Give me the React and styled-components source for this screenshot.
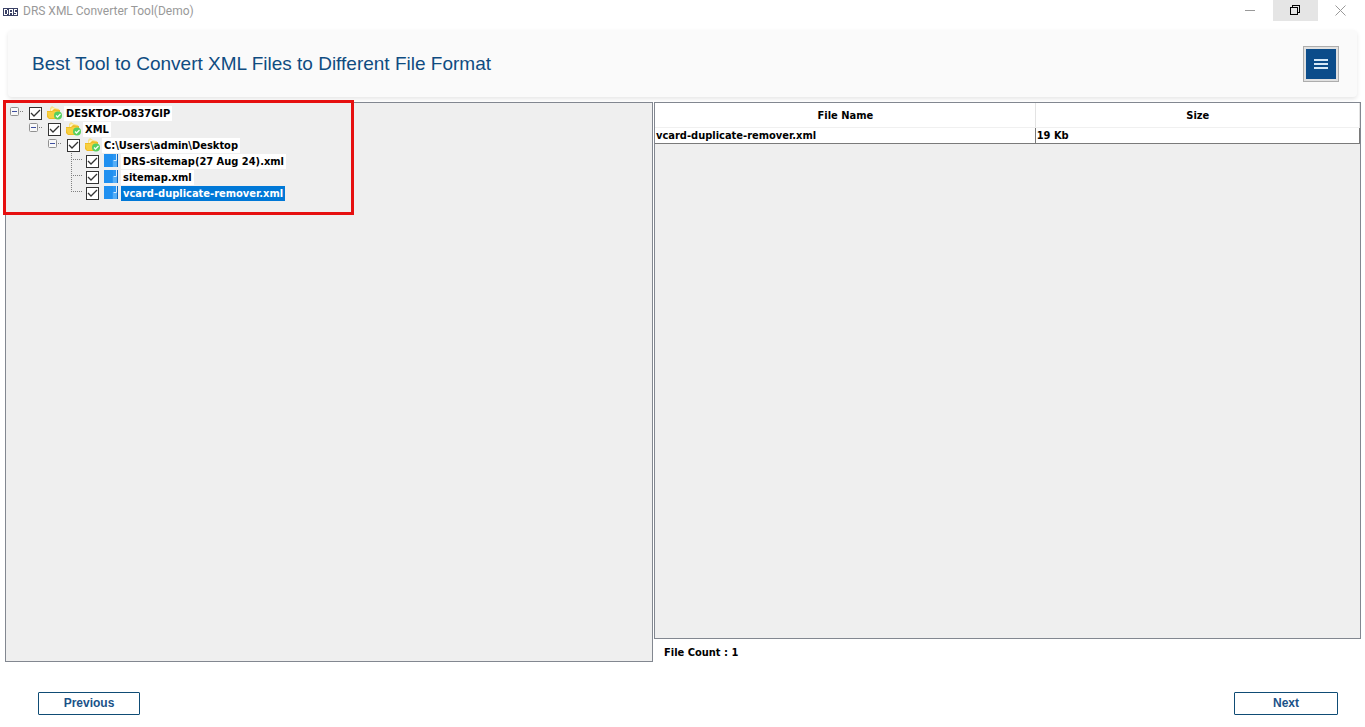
import React, { useState } from 'react'
import styled, { createGlobalStyle } from 'styled-components'

const GlobalStyle = createGlobalStyle`
  * {
    box-sizing: border-box;
  }
  body {
    margin: 0;
    background-color: #fff;
    color: #000;
    font-family: 'DejaVu Sans Condensed', 'Noto Sans', sans-serif;
    font-size: 11px;
    font-weight: 700;
  }
`

const Window = styled.div`
  display: flex;
  flex-direction: column;
  min-height: 100vh;
`

const TitleBar = styled.div`
  display: flex;
  align-items: center;
  height: 23px;
  padding-left: 3px;
  gap: 5px;
`
const WindowTitle = styled.span`
  flex: 1;
  color: #999;
  font-family: Roboto, 'Open Sans', sans-serif;
  font-size: 12px;
  font-weight: 400;
  line-height: 23px;
`
const WindowButton = styled.button`
  display: grid;
  place-items: center;
  width: 45px;
  height: 21px;
  padding: 0;
  border: 0;
  background-color: ${props => props.$active ? '#e5e5e5' : 'transparent'};
`
const WindowButtons = styled.div`
  display: flex;
  align-self: flex-start;
  margin-right: 2px;
`

const Header = styled.header`
  display: flex;
  align-items: center;
  justify-content: space-between;
  height: 67px;
  margin: 7px 8px 5px;
  padding: 1px 18px 0 24px;
  border-radius: 4px;
  background-color: #fafafa;
  box-shadow: 0 2px 4px rgba(0,0,0,0.1);
`
const Heading = styled.h1`
  margin: 0;
  color: #0f4c81;
  font-family: 'Liberation Sans', Arial, sans-serif;
  font-size: 19px;
  font-weight: 400;
  line-height: 22px;
`
const MenuButton = styled.button`
  display: grid;
  place-items: center;
  width: 36px;
  height: 36px;
  padding: 0;
  border: 1px solid #adadad;
  background-color: #0b4c8a;
  box-shadow: inset 0 0 0 2px #e1e1e1;
`

const Main = styled.main`
  display: grid;
  flex: 1;
  grid-template-columns: 648fr 707fr;
  gap: 1px;
  padding: 0 4px 0 5px;
`
const Pane = styled.section`
  position: relative;
  flex: 1;
  border: 1px solid #828790;
  background-color: #efefef;
`
const Column = styled.div`
  display: flex;
  flex-direction: column;
`
const Highlight = styled.div`
  position: absolute;
  top: -3px;
  left: -3px;
  width: 351px;
  height: 115px;
  border: 3px solid #e60f0f;
  pointer-events: none;
`

const Tree = styled.ul`
  margin: 0;
  padding: 2px 0 0 4px;
  list-style: none;
`
const Branch = styled.ul`
  margin: 0;
  padding: 0 0 0 19px;
  list-style: none;
`
const Row = styled.label`
  display: flex;
  align-items: center;
  height: 16px;
`
const Tick = styled.span`
  display: grid;
  width: 13px;
  height: 13px;
  margin-right: 5px;

  > * {
    grid-area: 1 / 1;
  }
  svg {
    pointer-events: none;
  }
  input:not(:checked) + svg {
    visibility: hidden;
  }
`
const TickBox = styled.input`
  appearance: none;
  width: 13px;
  height: 13px;
  margin: 0;
  border: 1px solid #333;
  background-color: #fff;
`
const NodeName = styled.span`
  margin-left: 2px;
  padding: 1px 2px 0;
  line-height: 14px;
  white-space: nowrap;
  color: ${props => props.$selected ? '#fff' : '#000'};
  background-color: ${props => props.$selected ? '#0078d7' : '#fff'};
`

const Table = styled.table`
  width: 100%;
  table-layout: fixed;
  border-collapse: separate;
  border-spacing: 0;
  background-color: #fff;
`
const HeadCell = styled.th`
  width: ${props => props.$width};
  height: 25px;
  padding: 1px 0 0 1px;
  border-right: 1px solid #e3e3e3;
  border-bottom: 1px solid #f0f0f0;
  font-weight: 700;
`
const Cell = styled.td`
  height: 16px;
  padding: 0 1px;
  border-right: 1px solid #7a7a7a;
  border-bottom: 1px solid #7a7a7a;
  line-height: 15px;
`
const FileCount = styled.div`
  height: 23px;
  padding-left: 10px;
  line-height: 27px;
`

const Footer = styled.footer`
  display: flex;
  justify-content: space-between;
  padding: 30px 27px 12px 38px;
`
const NavButton = styled.button`
  width: ${props => props.$wide ? '104px' : '102px'};
  height: 23px;
  padding: 0 0 2px;
  border: 1px solid #0f4c75;
  border-radius: 1px;
  background-color: #fff;
  color: #1b5288;
  font-family: 'Liberation Sans', Arial, sans-serif;
  font-size: 12px;
  font-weight: 700;
`

const AppIcon = () => (
  <svg width='15' height='8' viewBox='0 0 15 8' shapeRendering='crispEdges' fill='none'>
    <rect width='15' height='8' fill='#3b4266' />
    <path d='M1.5 1v6M1 1.5h3M1 6.5h3M4.5 2v4M6.5 2v5M6 1.5h3M9.5 1v6M7 4.5h2M11 1.5h3M11.5 2v2M11 4.5h3M13.5 5v2M11 6.5h3' stroke='#fff' />
  </svg>
)

const MinimizeIcon = () => (
  <svg width='11' height='11' fill='none' stroke='#999'>
    <path d='M0 5.5h10' />
  </svg>
)

const RestoreIcon = () => (
  <svg width='11' height='11' fill='none' stroke='#000' shapeRendering='crispEdges'>
    <path d='M.5 2.5h7v7h-7zM2.5 2V.5h7v7H8' />
  </svg>
)

const CloseIcon = () => (
  <svg width='11' height='11' fill='none' stroke='#999'>
    <path d='M.5.5l10 10M10.5.5l-10 10' />
  </svg>
)

const MenuIcon = () => (
  <svg width='14' height='12' fill='none' stroke='#d5e8f7' strokeWidth='2'>
    <path d='M0 2h14M0 6h14M0 10h14' />
  </svg>
)

const CheckIcon = () => (
  <svg width='13' height='13' fill='none' stroke='#333' strokeWidth='1.3'>
    <path d='M2 6l3 3 6-6' />
  </svg>
)

const Expander = () => (
  <svg width='19' height='16' fill='none'>
    <rect x='.5' y='2.5' width='8' height='8' rx='1' fill='#f8f8f8' stroke='#919191' />
    <path d='M2 6.5h5' stroke='#3f4f9f' />
    <path d='M10 6.5h4' stroke='#808080' strokeDasharray='1 1' />
  </svg>
)

// the dotted line stops half way down on the last child
const Guide = ({ last }) => (
  <svg width='19' height='16' fill='none' stroke='#808080' strokeDasharray='1 1'>
    <path d={last ? 'M4.5 0v7' : 'M4.5 0v16'} />
    <path d='M4 6.5h11' />
  </svg>
)

const FolderIcon = () => (
  <svg width='15' height='16' viewBox='0 0 15 16'>
    <path d='M3 6V3l2-2 3 2 4 1v4H3z' fill='#f8e28a' />
    <path d='M4 4l2-1 2 1v2H4z' fill='#fff6c8' />
    <path d='M0 6h5l2-2 6 1v7l-2 2H2L0 12z' fill='#f0bd27' />
    <path d='M0 7h5l2-1h5l-1 7H2z' fill='#f8d040' />
    <circle cx='11' cy='10.5' r='4' fill='#58cf60' />
    <path d='M9 10.5l1.5 1.5 3-3' fill='none' stroke='#f4fff4' strokeWidth='1.3' />
  </svg>
)

const FileIcon = () => (
  <svg width='15' height='16' viewBox='0 0 15 16'>
    <path d='M0 1h14v13H0z' fill='#2b96f3' />
    <path d='M0 1h9v6H8v7H0z' fill='#2090f0' />
    <path d='M9 8h4v6H9z' fill='#55aef7' />
    <path d='M12.5 1v6.5h-3' fill='none' stroke='#d5ecff' />
    <path d='M13.5 1v13' stroke='#1267bd' />
  </svg>
)

const tree = {
  name: 'DESKTOP-O837GIP',
  children: [{
    name: 'XML',
    children: [{
      name: 'C:\\Users\\admin\\Desktop',
      children: [
        { name: 'DRS-sitemap(27 Aug 24).xml' },
        { name: 'sitemap.xml' },
        { name: 'vcard-duplicate-remover.xml' }
      ]
    }]
  }]
}

const files = [
  { name: 'vcard-duplicate-remover.xml', size: '19 Kb' }
]

const Node = ({ node, last, selected, onSelect }) => (
  <li>
    <Row>
      {node.children ? <Expander /> : <Guide last={last} />}
      <Tick>
        <TickBox type='checkbox' defaultChecked />
        <CheckIcon />
      </Tick>
      {node.children ? <FolderIcon /> : <FileIcon />}
      <NodeName $selected={selected === node.name} onClick={() => onSelect(node.name)}>
        {node.name}
      </NodeName>
    </Row>
    {node.children && (
      <Branch>
        {node.children.map((child, i) => (
          <Node
            key={child.name}
            node={child}
            last={i === node.children.length - 1}
            selected={selected}
            onSelect={onSelect}
          />
        ))}
      </Branch>
    )}
  </li>
)

export default function App() {
  const [selected, setSelected] = useState('vcard-duplicate-remover.xml')

  return (
    <Window>
      <GlobalStyle />
      <TitleBar>
        <AppIcon />
        <WindowTitle>DRS XML Converter Tool(Demo)</WindowTitle>
        <WindowButtons>
          <WindowButton aria-label='Minimize'><MinimizeIcon /></WindowButton>
          <WindowButton aria-label='Restore' $active><RestoreIcon /></WindowButton>
          <WindowButton aria-label='Close'><CloseIcon /></WindowButton>
        </WindowButtons>
      </TitleBar>
      <Header>
        <Heading>Best Tool to Convert XML Files to Different File Format</Heading>
        <MenuButton aria-label='Menu'><MenuIcon /></MenuButton>
      </Header>
      <Main>
        <Pane>
          <Tree>
            <Node node={tree} selected={selected} onSelect={setSelected} />
          </Tree>
          <Highlight />
        </Pane>
        <Column>
          <Pane>
            <Table>
              <thead>
                <tr>
                  <HeadCell $width='54%'>File Name</HeadCell>
                  <HeadCell>Size</HeadCell>
                </tr>
              </thead>
              <tbody>
                {files.map(file => (
                  <tr key={file.name}>
                    <Cell>{file.name}</Cell>
                    <Cell>{file.size}</Cell>
                  </tr>
                ))}
              </tbody>
            </Table>
          </Pane>
          <FileCount>File Count : {files.length}</FileCount>
        </Column>
      </Main>
      <Footer>
        <NavButton>Previous</NavButton>
        <NavButton $wide>Next</NavButton>
      </Footer>
    </Window>
  )
}
